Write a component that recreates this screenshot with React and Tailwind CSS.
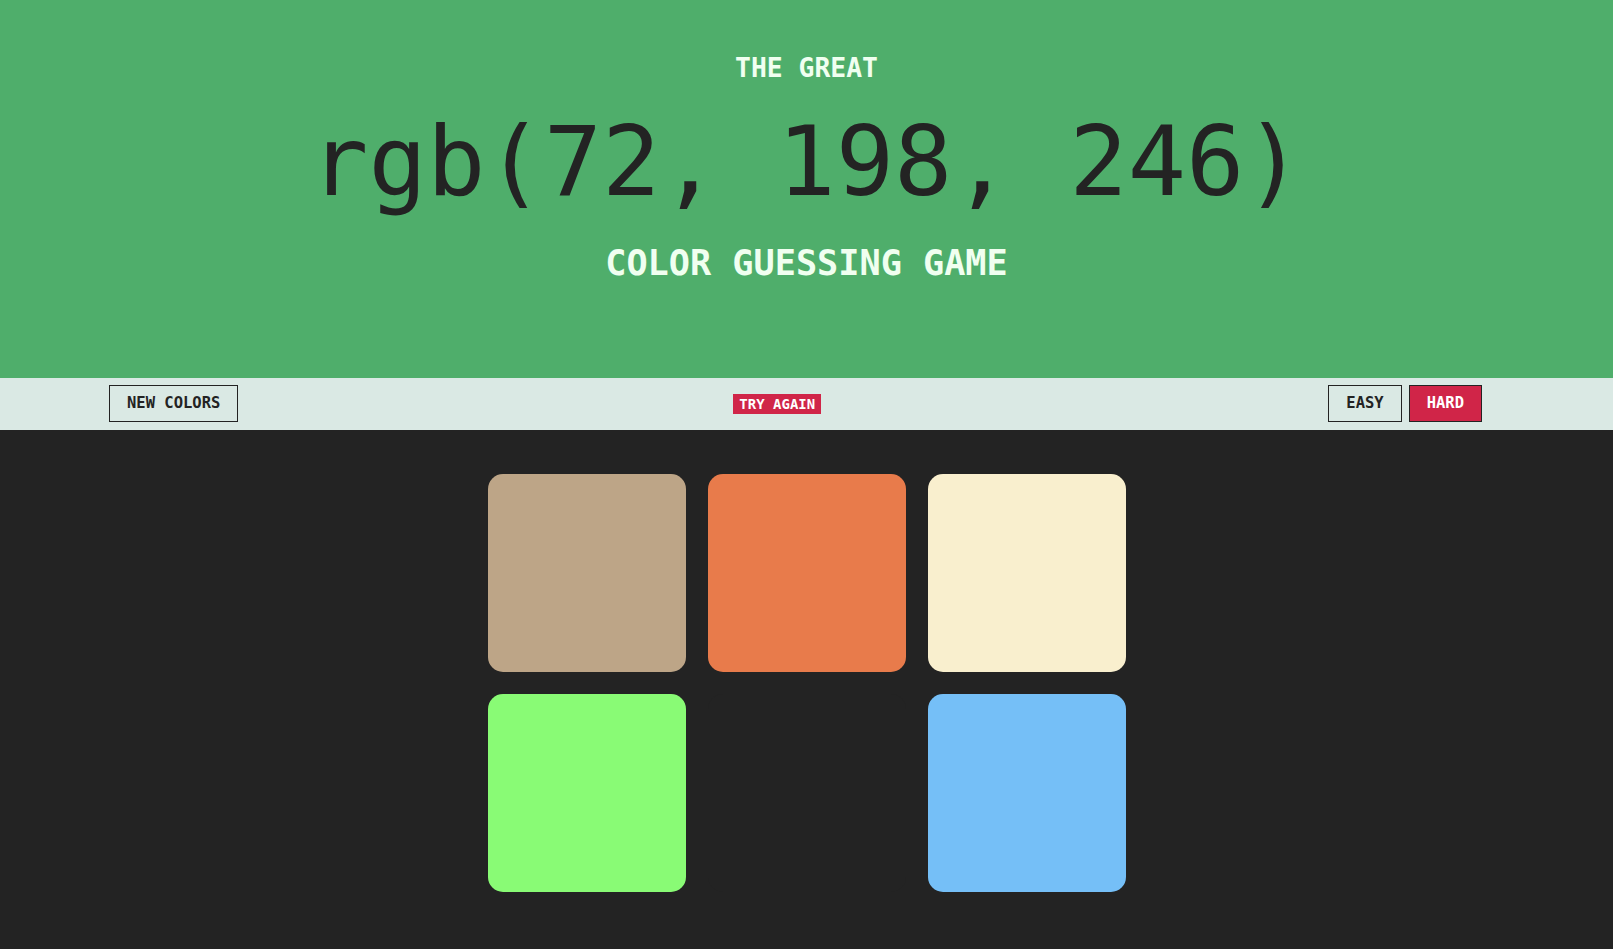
import React, { useState } from 'react';

const mono = { fontFamily: '"DejaVu Sans Mono", "Liberation Mono", monospace' };

const COLORS = [
  'rgb(189, 165, 135)',
  'rgb(232, 123, 75)',
  'rgb(249, 239, 206)',
  'rgb(137, 251, 117)',
  'rgb(72, 198, 246)',
  'rgb(117, 191, 247)',
];

const squareBg = [
  'bg-[#bda587]',
  'bg-[#e87b4b]',
  'bg-[#f9efce]',
  'bg-[#89fb75]',
  'bg-[#232323]',
  'bg-[#75bff7]',
];

export default function App() {
  const [mode, setMode] = useState('hard');
  const [hidden] = useState([4]);

  const btn = 'h-[37px] px-[17px] border border-[#232323] text-[15.5px] font-bold uppercase leading-none';

  return (
    <div className="min-h-screen bg-[#232323]" style={mono}>
      {/* Header */}
      <header className="bg-[#4fae6b] flex flex-col items-center pt-[55px] pb-[97px]">
        <p className="text-[26.4px] leading-none font-bold text-[#f0fff0]">THE GREAT</p>
        <p className="mt-[32px] text-[97px] leading-none text-[#232323]">{COLORS[4]}</p>
        <h1 className="mt-[35px] text-[35.2px] leading-none font-bold text-[#f0fff0]">COLOR GUESSING GAME</h1>
      </header>

      {/* Controls */}
      <nav className="h-[52px] bg-[#dae9e4] flex items-center pl-[109px] pr-[131px] text-[#232323]">
        <button className={`${btn} bg-[#dae9e4]`}>New Colors</button>
        <span className="ml-[495px] inline-block h-[20px] px-[6px] bg-[#d02548] text-white text-[14px] leading-[20px] font-bold">
          TRY AGAIN
        </span>
        <div className="ml-auto flex gap-[7px]">
          <button
            onClick={() => setMode('easy')}
            className={`${btn} ${mode === 'easy' ? 'bg-[#d02548] text-white' : 'bg-[#dae9e4]'}`}
          >
            Easy
          </button>
          <button
            onClick={() => setMode('hard')}
            className={`${btn} ${mode === 'hard' ? 'bg-[#d02548] text-white' : 'bg-[#dae9e4]'}`}
          >
            Hard
          </button>
        </div>
      </nav>

      {/* Squares */}
      <div className="w-[638px] mx-auto mt-[44px] grid grid-cols-3 gap-[22px]">
        {squareBg.map((bg, i) => (
          <div
            key={i}
            className={`h-[198px] rounded-[15px] ${hidden.includes(i) ? 'bg-[#232323]' : bg}`}
          />
        ))}
      </div>
    </div>
  );
}
